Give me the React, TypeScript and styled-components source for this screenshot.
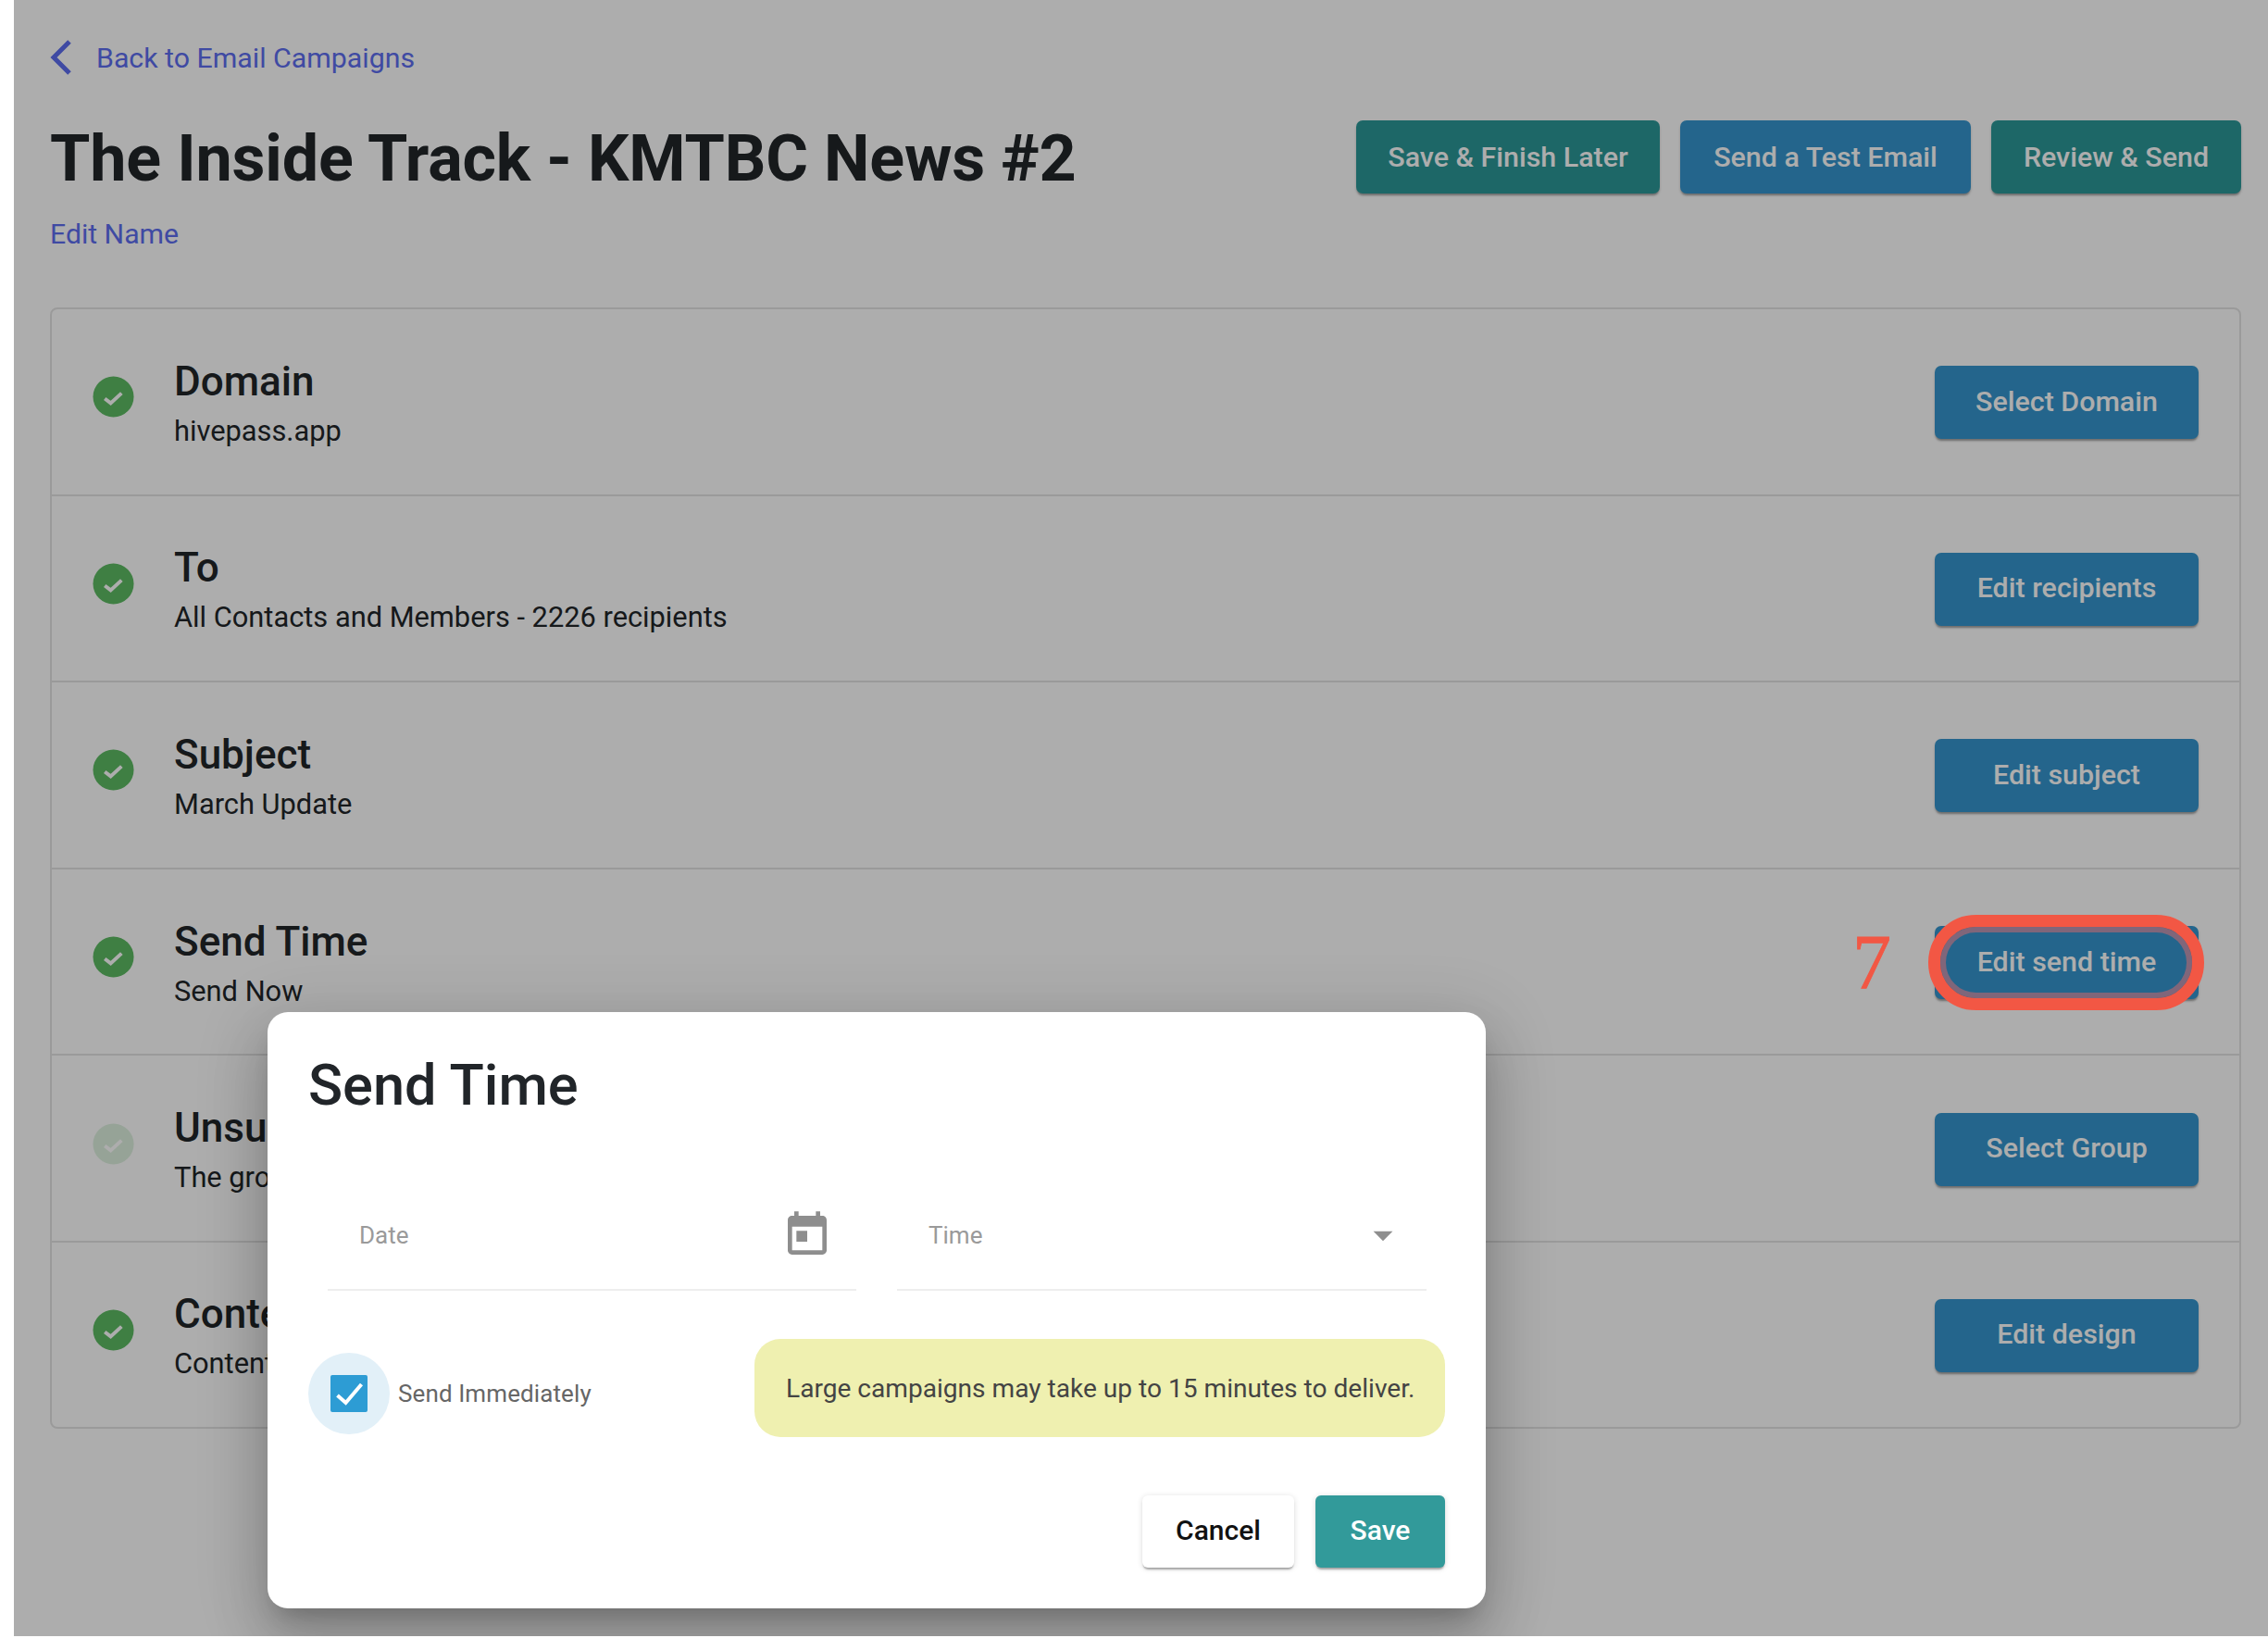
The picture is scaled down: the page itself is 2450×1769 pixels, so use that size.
import React from "react";
import styled, { createGlobalStyle } from "styled-components";

const Global = createGlobalStyle`
  html, body { margin: 0; padding: 0; background: #fff; }
  body { font-family: Roboto, "Liberation Sans", sans-serif; color: #212529; }
  * { box-sizing: border-box; }
`;

const Screen = styled.div`
  position: relative;
  margin-left: 15px;
  height: 1767px;
  overflow: hidden;
  background: #fff;
`;

const Page = styled.main`
  display: flex;
  flex-direction: column;
  padding: 38px 29px 0 39px;
`;

const BackLink = styled.a`
  display: flex;
  align-items: center;
  gap: 26px;
  height: 48px;
  font-size: 30.3px;
  color: #5d6ef0;
`;

const Header = styled.header`
  display: flex;
  justify-content: space-between;
  align-items: flex-start;
  margin-top: 44px;
`;

const Title = styled.h1`
  margin: 0;
  font-size: 70px;
  line-height: 82px;
  font-weight: 700;
  letter-spacing: -0.16px;
`;

const HeaderActions = styled.div`
  display: flex;
  gap: 22px;
`;

const Button = styled.button<{ $tone: "teal" | "blue"; $width: number }>`
  width: ${(p) => p.$width}px;
  height: 79px;
  border: 0;
  border-radius: 7px;
  padding: 0;
  font-family: inherit;
  font-size: 30.4px;
  font-weight: 500;
  color: #fff;
  background: ${(p) => (p.$tone === "teal" ? "#2c9999" : "#3596ce")};
  box-shadow: 0 3px 2px -1px rgba(0,0,0,.25), 0 2px 3px rgba(0,0,0,.16);
`;

const RowButton = styled(Button)`
  margin-top: 2px;
  padding-bottom: 3px;
`;

const EditName = styled.a`
  display: block;
  margin-top: 23px;
  font-size: 30.2px;
  line-height: 36px;
  color: #5d6ef0;
`;

const Card = styled.section`
  margin-top: 61px;
  border: 2px solid #e4e4e4;
  border-radius: 8px;
`;

const Row = styled.div`
  display: flex;
  align-items: center;
  height: 201.6px;
  padding: 0 44px 0 44px;
  border-bottom: 2px solid #e4e4e4;
  &:last-child {
    height: 199px;
    border-bottom: 0;
  }
`;

const StatusIcon = styled.svg<{ $faded?: boolean }>`
  flex: none;
  width: 45px;
  height: 45px;
  opacity: ${(p) => (p.$faded ? 0.2 : 1)};
  margin-top: -10px;
`;

const RowText = styled.div`
  flex: 1;
  margin-left: 43px;
  margin-top: 3px;
`;

const RowTitle = styled.div`
  font-size: 44px;
  line-height: 50px;
  font-weight: 500;
`;

const RowSub = styled.div`
  font-size: 30.8px;
  line-height: 36px;
  margin-top: 11px;
`;

const Scrim = styled.div`
  position: absolute;
  inset: 0;
  background: rgba(0,0,0,.32);
`;

const Ring = styled.div`
  position: absolute;
  left: 2068px;
  top: 988px;
  width: 298px;
  height: 103px;
  border-radius: 52px;
  border: 13px solid #f25744;
  box-shadow: inset 0 0 0 6px #80667a;
`;

const StepNumber = styled.div`
  position: absolute;
  left: 1986px;
  top: 990px;
  font-family: "Liberation Serif", serif;
  font-size: 84px;
  line-height: 100px;
  color: #f25744;
  -webkit-text-stroke: 0.8px #f25744;
`;

const Dialog = styled.div`
  position: absolute;
  left: 274px;
  top: 1093px;
  width: 1316px;
  height: 644px;
  display: flex;
  flex-direction: column;
  padding: 44px;
  border-radius: 22px;
  background: #fff;
  box-shadow: 0 17px 24px -11px rgba(0,0,0,.2), 0 38px 60px 5px rgba(0,0,0,.14), 0 14px 72px 12px rgba(0,0,0,.12);
`;

const DialogTitle = styled.h2`
  margin: 0;
  font-size: 61.3px;
  line-height: 70px;
  font-weight: 500;
  color: #212529;
`;

const Fields = styled.div`
  display: grid;
  grid-template-columns: 571px 572px;
  gap: 44px;
  margin: 0 0 0 21px;
  padding-top: 76px;
`;

const Field = styled.div`
  display: flex;
  align-items: center;
  justify-content: space-between;
  height: 111px;
  padding: 0 25px 8px 34px;
  border-bottom: 2px solid #eeeeee;
  font-size: 26px;
  color: #9a9a9a;
`;

const FieldIcon = styled.svg`
  width: 56px;
  height: 56px;
  fill: #8e8e8e;
`;

const CaretIcon = styled.svg`
  width: 50px;
  height: 50px;
  fill: #8e8e8e;
  margin-right: -3px;
`;

const Options = styled.div`
  display: flex;
  align-items: flex-start;
  justify-content: space-between;
  margin-top: 52px;
`;

const CheckWrap = styled.label`
  display: flex;
  align-items: center;
  gap: 9px;
  margin-top: 15px;
  font-size: 26px;
  letter-spacing: .1px;
  color: #666;
`;

const CheckHalo = styled.span`
  display: flex;
  align-items: center;
  justify-content: center;
  width: 88px;
  height: 88px;
  border-radius: 50%;
  background: #e2f0f8;
`;

const CheckBox = styled.span`
  display: flex;
  width: 40px;
  height: 40px;
  border-radius: 2px;
  background: #2d9cd4;
`;

const Notice = styled.div`
  display: flex;
  align-items: center;
  width: 746px;
  height: 106px;
  padding-left: 34px;
  border-radius: 28px;
  background: #eff0b0;
  font-size: 28.1px;
  color: #444;
`;

const Footer = styled.div`
  display: flex;
  justify-content: flex-end;
  gap: 23px;
  margin-top: 63px;
`;

const CancelButton = styled.button`
  width: 164px;
  height: 78px;
  border: 0;
  border-radius: 6px;
  padding: 0 0 3px;
  font-family: inherit;
  font-size: 30px;
  font-weight: 500;
  color: #111;
  background: #fff;
  box-shadow: 0 3px 2px -1px rgba(0,0,0,.3), 0 1px 6px rgba(0,0,0,.14);
`;

const SaveButton = styled(CancelButton)`
  width: 140px;
  color: #fff;
  background: #329a9a;
`;

const CheckCircle = ({ faded }: { faded?: boolean }) => (
  <StatusIcon viewBox="0 0 46 46" $faded={faded}>
    <circle cx="23" cy="23" r="22.5" fill="#5dbb63" />
    <path d="M13.5 25l6.5 5 12-11" fill="none" stroke="#fff" strokeWidth="4" />
  </StatusIcon>
);

const rows = [
  { title: "Domain", sub: "hivepass.app", action: "Select Domain" },
  { title: "To", sub: "All Contacts and Members - 2226 recipients", action: "Edit recipients" },
  { title: "Subject", sub: "March Update", action: "Edit subject" },
  { title: "Send Time", sub: "Send Now", action: "Edit send time" },
  { title: "Unsubscribe Group", sub: "The group", action: "Select Group", faded: true },
  { title: "Content", sub: "Content", action: "Edit design" },
];

export default function App() {
  return (
    <>
      <Global />
      <Screen>
        <Page>
          <BackLink>
            <svg width="24" height="38" viewBox="0 0 24 38">
              <path d="M21 2L4 19l17 17" fill="none" stroke="#5d6ef0" strokeWidth="5" />
            </svg>
            Back to Email Campaigns
          </BackLink>
          <Header>
            <div>
              <Title>The Inside Track - KMTBC News #2</Title>
              <EditName>Edit Name</EditName>
            </div>
            <HeaderActions>
              <Button $tone="teal" $width={328}>Save &amp; Finish Later</Button>
              <Button $tone="blue" $width={314}>Send a Test Email</Button>
              <Button $tone="teal" $width={270}>Review &amp; Send</Button>
            </HeaderActions>
          </Header>
          <Card>
            {rows.map((r) => (
              <Row key={r.title}>
                <CheckCircle faded={r.faded} />
                <RowText>
                  <RowTitle>{r.title}</RowTitle>
                  <RowSub>{r.sub}</RowSub>
                </RowText>
                <RowButton $tone="blue" $width={285}>{r.action}</RowButton>
              </Row>
            ))}
          </Card>
        </Page>
        <Scrim />
        <StepNumber>7</StepNumber>
        <Ring />
        <Dialog>
          <DialogTitle>Send Time</DialogTitle>
          <Fields>
            <Field>
              Date
              <FieldIcon viewBox="0 0 24 24">
                <path d="M19 3h-1V1h-2v2H8V1H6v2H5c-1.11 0-1.99.9-1.99 2L3 19c0 1.1.89 2 2 2h14c1.1 0 2-.9 2-2V5c0-1.1-.9-2-2-2zm0 16H5V8h14v11zM7 10h5v5H7z" />
              </FieldIcon>
            </Field>
            <Field>
              Time
              <CaretIcon viewBox="0 0 24 24">
                <path d="M7 10l5 5 5-5z" />
              </CaretIcon>
            </Field>
          </Fields>
          <Options>
            <CheckWrap>
              <CheckHalo>
                <CheckBox>
                  <svg width="40" height="40" viewBox="0 0 40 40">
                    <path d="M7.5 22l9 8L33.5 10" fill="none" stroke="#fff" strokeWidth="4" />
                  </svg>
                </CheckBox>
              </CheckHalo>
              Send Immediately
            </CheckWrap>
            <Notice>Large campaigns may take up to 15 minutes to deliver.</Notice>
          </Options>
          <Footer>
            <CancelButton>Cancel</CancelButton>
            <SaveButton>Save</SaveButton>
          </Footer>
        </Dialog>
      </Screen>
    </>
  );
}
